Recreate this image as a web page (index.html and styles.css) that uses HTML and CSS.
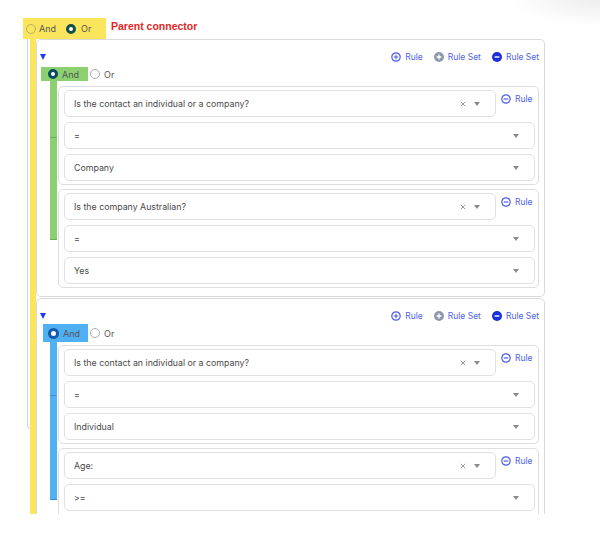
FILE: index.html
```html
<!DOCTYPE html>
<html>
<head>
<meta charset="utf-8">
<link rel="stylesheet" href="styles.css">
</head>
<body>
<div class="viewport">
  <div class="top">
    <div class="conn-yellow">
      <span class="radio"></span><span class="lbl lbl-and">And</span>
      <span class="radio on on-yellow radio-or"></span><span class="lbl lbl-or">Or</span>
    </div>
    <span class="parent-label">Parent connector</span>
  </div>

  <div class="root">
    <div class="root-bar"></div>

    <div class="group g1">
      <div class="bar bar-green"></div>
      <div class="group-head">
        <span class="caret"></span>
        <div class="actions">
          <button class="act"><svg viewBox="0 0 10 10"><circle cx="5" cy="5" r="4.2" fill="none" stroke="#4c5fe6" stroke-width="1.2"/><path d="M5 2.7v4.6M2.7 5h4.6" stroke="#4c5fe6" stroke-width="1.1"/></svg>Rule</button>
          <button class="act"><svg viewBox="0 0 10 10"><circle cx="5" cy="5" r="5" fill="#8e9aab"/><path d="M5 2.6v4.8M2.6 5h4.8" stroke="#fff" stroke-width="1.3"/></svg>Rule Set</button>
          <button class="act"><svg viewBox="0 0 10 10"><circle cx="5" cy="5" r="5" fill="#1a2fd8"/><path d="M2.6 5h4.8" stroke="#fff" stroke-width="1.4"/></svg>Rule Set</button>
        </div>
      </div>
      <div class="combo-row">
        <div class="combo combo-green"><span class="radio on on-green"></span><span class="lbl">And</span></div>
        <span class="radio"></span><span class="lbl">Or</span>
      </div>
      <div class="rules">
        <div class="rule">
          <div class="row1">
            <div class="sel"><span class="txt">Is the contact an individual or a company?</span><svg class="x" viewBox="0 0 6 6"><path d="M0.8 0.8l4.4 4.4M5.2 0.8l-4.4 4.4" stroke="#9a9a9a" stroke-width="1"/></svg><span class="arr"></span></div>
            <button class="act remove"><svg viewBox="0 0 10 10"><circle cx="5" cy="5" r="4.2" fill="none" stroke="#4c5fe6" stroke-width="1.2"/><path d="M2.7 5h4.6" stroke="#4c5fe6" stroke-width="1.2"/></svg>Rule</button>
          </div>
          <div class="sel"><span class="txt">=</span><span class="arr"></span></div>
          <div class="sel"><span class="txt">Company</span><span class="arr"></span></div>
        </div>
        <div class="rule">
          <div class="row1">
            <div class="sel"><span class="txt">Is the company Australian?</span><svg class="x" viewBox="0 0 6 6"><path d="M0.8 0.8l4.4 4.4M5.2 0.8l-4.4 4.4" stroke="#9a9a9a" stroke-width="1"/></svg><span class="arr"></span></div>
            <button class="act remove"><svg viewBox="0 0 10 10"><circle cx="5" cy="5" r="4.2" fill="none" stroke="#4c5fe6" stroke-width="1.2"/><path d="M2.7 5h4.6" stroke="#4c5fe6" stroke-width="1.2"/></svg>Rule</button>
          </div>
          <div class="sel"><span class="txt">=</span><span class="arr"></span></div>
          <div class="sel"><span class="txt">Yes</span><span class="arr"></span></div>
        </div>
      </div>
    </div>

    <div class="group g2">
      <div class="bar bar-blue"></div>
      <div class="group-head">
        <span class="caret"></span>
        <div class="actions">
          <button class="act"><svg viewBox="0 0 10 10"><circle cx="5" cy="5" r="4.2" fill="none" stroke="#4c5fe6" stroke-width="1.2"/><path d="M5 2.7v4.6M2.7 5h4.6" stroke="#4c5fe6" stroke-width="1.1"/></svg>Rule</button>
          <button class="act"><svg viewBox="0 0 10 10"><circle cx="5" cy="5" r="5" fill="#8e9aab"/><path d="M5 2.6v4.8M2.6 5h4.8" stroke="#fff" stroke-width="1.3"/></svg>Rule Set</button>
          <button class="act"><svg viewBox="0 0 10 10"><circle cx="5" cy="5" r="5" fill="#1a2fd8"/><path d="M2.6 5h4.8" stroke="#fff" stroke-width="1.4"/></svg>Rule Set</button>
        </div>
      </div>
      <div class="combo-row">
        <div class="combo combo-blue"><span class="radio on on-blue"></span><span class="lbl">And</span></div>
        <span class="radio"></span><span class="lbl">Or</span>
      </div>
      <div class="rules">
        <div class="rule">
          <div class="row1">
            <div class="sel"><span class="txt">Is the contact an individual or a company?</span><svg class="x" viewBox="0 0 6 6"><path d="M0.8 0.8l4.4 4.4M5.2 0.8l-4.4 4.4" stroke="#9a9a9a" stroke-width="1"/></svg><span class="arr"></span></div>
            <button class="act remove"><svg viewBox="0 0 10 10"><circle cx="5" cy="5" r="4.2" fill="none" stroke="#4c5fe6" stroke-width="1.2"/><path d="M2.7 5h4.6" stroke="#4c5fe6" stroke-width="1.2"/></svg>Rule</button>
          </div>
          <div class="sel"><span class="txt">=</span><span class="arr"></span></div>
          <div class="sel"><span class="txt">Individual</span><span class="arr"></span></div>
        </div>
        <div class="rule">
          <div class="row1">
            <div class="sel"><span class="txt">Age:</span><svg class="x" viewBox="0 0 6 6"><path d="M0.8 0.8l4.4 4.4M5.2 0.8l-4.4 4.4" stroke="#9a9a9a" stroke-width="1"/></svg><span class="arr"></span></div>
            <button class="act remove"><svg viewBox="0 0 10 10"><circle cx="5" cy="5" r="4.2" fill="none" stroke="#4c5fe6" stroke-width="1.2"/><path d="M2.7 5h4.6" stroke="#4c5fe6" stroke-width="1.2"/></svg>Rule</button>
          </div>
          <div class="sel"><span class="txt">&gt;=</span><span class="arr"></span></div>
          <div class="sel sel-empty"></div>
        </div>
      </div>
    </div>
  </div>
</div>
</body>
</html>
```

FILE: styles.css
```css
* { box-sizing: border-box; margin: 0; padding: 0; }
body { margin: 0; background: #fff; font-family: Inter, "Noto Sans", sans-serif; color: #444; }

.viewport {
  height: 514px;
  overflow: hidden;
  padding: 18px 0 0 23px;
  background: radial-gradient(90px 26px at 100% 0, rgba(0,0,0,0.07), rgba(0,0,0,0));
}

.top { display: flex; align-items: flex-start; height: 21px; }
.conn-yellow {
  display: flex; align-items: center;
  width: 83px; height: 21px;
  background: #fbe55c;
  padding-left: 3px;
  font-size: 9px; color: #555;
}
.conn-yellow .lbl-and { margin-left: 3px; }
.conn-yellow .radio-or { margin-left: 10px; }
.conn-yellow .lbl-or { margin-left: 5px; }
.parent-label {
  margin-left: 5px; margin-top: 2px;
  font-family: "Liberation Sans", Arial, sans-serif;
  font-weight: bold; font-size: 10.5px; line-height: 12px; color: #e3261f;
}

.radio {
  flex: none;
  width: 10px; height: 10px; border-radius: 50%;
  border: 1px solid #ababab; background: #fff;
}
.conn-yellow .radio { background: transparent; border-color: #b9b06c; }
.radio.on { border-width: 3px; background: #fff; }
.conn-yellow .radio.on-yellow { border-color: #124f48; background: #fff; }
.radio.on-green { border-color: #0d4a5c; }
.radio.on-blue { border-color: #1859b0; width: 11px; height: 11px; }

.root { position: relative; margin-left: 4px; padding-left: 9px; }
.root::before {
  content: ""; position: absolute; left: 0; top: 0;
  width: 6px; height: 389px;
  border-left: 1px solid #d6d6d6; border-bottom: 1px solid #d6d6d6;
  border-bottom-left-radius: 4px;
}
.root-bar {
  position: absolute; left: 3px; top: 0;
  width: 6px; height: 480px;
  background: #fbe55c; z-index: 2;
}

.group {
  position: relative;
  width: 509px;
  border: 1px solid #dadada; border-radius: 5px;
  padding: 0 5px 8px 0;
  background: #fff;
}
.g2 { margin-top: 1px; }

.group-head {
  display: flex; align-items: center; justify-content: space-between;
  height: 10px; margin-top: 12px;
}
.caret {
  margin-left: 3px; width: 0; height: 0;
  border-left: 3px solid transparent; border-right: 3px solid transparent;
  border-top: 6px solid #1f3cf2;
}
.actions { display: flex; align-items: center; gap: 11px; }
.act {
  display: flex; align-items: center; gap: 4px;
  border: 0; background: none; padding: 0;
  font-family: Inter, "Noto Sans", sans-serif; font-size: 8.5px; color: #5064e6;
  line-height: 10px;
}
.act svg { width: 10px; height: 10px; flex: none; }

.combo-row {
  display: flex; align-items: center;
  margin-top: 5px; height: 14px;
  font-size: 9px; color: #555;
}
.combo { display: flex; align-items: center; height: 14px; }
.combo-green { width: 47px; margin-left: 4px; padding-left: 7px; background: #8bd172; }
.g2 .combo-row { margin-top: 3px; height: 18px; }
.combo-blue { width: 45px; height: 18px; margin-left: 6px; padding-left: 5px; background: #4fb0f3; }
.combo .lbl { margin-left: 4px; }
.combo-row > .radio { margin-left: 2px; }
.combo-row > .lbl { margin-left: 4px; }

.bar { position: absolute; left: 13px; width: 7px; z-index: 1; }
.bar::after { content: ""; position: absolute; left: 0; right: 0; height: 1px; background: rgba(0,0,0,0.18); }
.bar-green { top: 41px; height: 159px; background: #8bd172; border-bottom: 1px solid #6fae58; }
.bar-green::after { top: 56px; }
.bar-blue { top: 43px; height: 158px; background: #4fb0f3; border-bottom: 1px solid #3a8fd0; }
.bar-blue::after { top: 53px; }

.rules { margin: 5px 0 0 21px; display: flex; flex-direction: column; gap: 4px; }
.g2 .rules { margin-top: 3px; }
.rule {
  border: 1px solid #dcdee2; border-radius: 5px;
  padding: 3px 3px 3px 5px;
  display: flex; flex-direction: column; gap: 5px;
}
.row1 { display: flex; align-items: flex-start; gap: 5px; }
.row1 .sel { flex: 1; }
.remove { width: 34px; margin-top: 4px; }

.sel {
  display: flex; align-items: center;
  height: 27px;
  border: 1px solid #dfe1e5; border-radius: 5px;
  padding: 0 15px 0 9px;
  font-size: 8.8px; color: #4a4a4a; background: #fff;
}
.sel .txt { flex: 1; }
.sel .x { width: 6px; height: 6px; margin-right: 8px; }
.arr {
  width: 0; height: 0;
  border-left: 3px solid transparent; border-right: 3px solid transparent;
  border-top: 4px solid #8a8a8a;
}
```
